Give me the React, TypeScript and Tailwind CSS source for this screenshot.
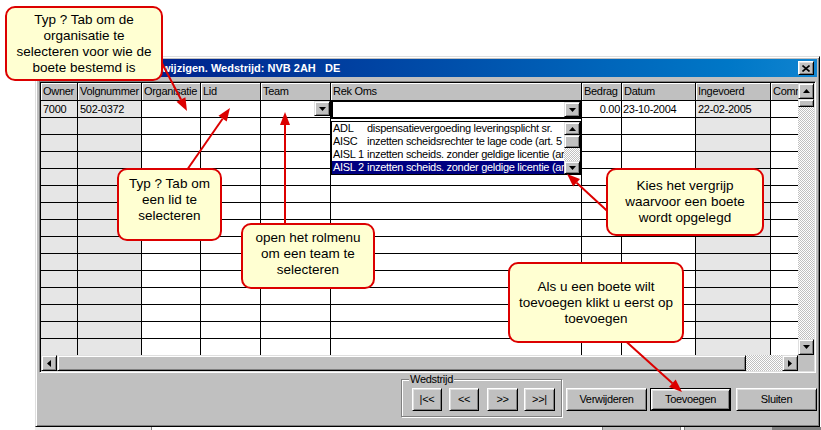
import React from "react"

// win98 bevels
const raised =
  "border border-t-white border-l-white border-r-black border-b-black shadow-[inset_1px_1px_#dfdfdf,inset_-1px_-1px_#808080] bg-[#c0c0c0]"
const sbtn =
  "border border-t-[#dfdfdf] border-l-[#dfdfdf] border-r-black border-b-black shadow-[inset_1px_1px_#ffffff,inset_-1px_-1px_#808080] bg-[#c0c0c0] flex items-center justify-center shrink-0"
const checker =
  "bg-[repeating-conic-gradient(#c0c0c0_0%_25%,#ffffff_0%_50%)] bg-[length:2px_2px]"

type Dir = "up" | "down" | "left" | "right"

function Tri({ dir }: { dir: Dir }) {
  const vert = dir === "up" || dir === "down"
  const w = vert ? 7 : 4
  const h = vert ? 4 : 7
  const pts = {
    up: "0,4 7,4 3.5,0",
    down: "0,0 7,0 3.5,4",
    left: "4,0 4,7 0,3.5",
    right: "0,0 0,7 4,3.5",
  }[dir]
  return (
    <svg width={w} height={h} viewBox={`0 0 ${w} ${h}`}>
      <polygon points={pts} fill="#000" />
    </svg>
  )
}

const cols = [
  { key: "owner", label: "Owner", w: "w-[37px]", body: "bg-[#e6e6e6]" },
  { key: "vol", label: "Volgnummer", w: "w-[64px]", body: "bg-[#e6e6e6]" },
  { key: "org", label: "Organisatie", w: "w-[59px]", body: "bg-white" },
  { key: "lid", label: "Lid", w: "w-[60px]", body: "bg-white" },
  { key: "team", label: "Team", w: "w-[70px]", body: "bg-white" },
  { key: "rek", label: "Rek Oms", w: "w-[251px]", body: "bg-white" },
  { key: "bedrag", label: "Bedrag", w: "w-[40px]", body: "bg-white" },
  { key: "datum", label: "Datum", w: "w-[74px]", body: "bg-white" },
  { key: "ingev", label: "Ingevoerd", w: "w-[75px]", body: "bg-[#e6e6e6]" },
  { key: "comm", label: "Commentaar", w: "w-[60px]", body: "bg-white" },
]

const first: Record<string, string> = {
  owner: "7000",
  vol: "502-0372",
  bedrag: "0.00",
  datum: "23-10-2004",
  ingev: "22-02-2005",
}

const rekItems = [
  { code: "ADL", desc: "dispensatievergoeding leveringsplicht sr." },
  { code: "AISC", desc: "inzetten scheidsrechter te lage code (art. 5" },
  { code: "AISL 1", desc: "inzetten scheids. zonder geldige licentie (art." },
  { code: "AISL 2", desc: "inzetten scheids. zonder geldige licentie (art." },
]

function Callout({ className, children }: { className: string; children: React.ReactNode }) {
  return (
    <div
      className={`absolute flex items-center justify-center text-center rounded-[10px] border-2 border-[#dc0000] bg-[#ffffd2] text-[13.5px] leading-[16px] text-black ${className}`}
    >
      <div>{children}</div>
    </div>
  )
}

function Grid() {
  return (
    <div className="mx-[1px] mt-[4px] h-[292px] border border-t-[#808080] border-l-[#808080] border-r-white border-b-white p-[1px] shadow-[inset_1px_1px_#000000,inset_-1px_-1px_#dfdfdf]">
      <div className="flex">
        <div className="relative w-[757px] h-[272px] overflow-hidden">
          {/* header */}
          <div className="flex h-[18px] border-b border-black">
            {cols.map((c) => (
              <div
                key={c.key}
                className={`${c.w} shrink-0 h-full bg-[#c0c0c0] border-r border-black shadow-[inset_1px_1px_#ffffff] px-[2px] leading-[17px] whitespace-nowrap overflow-hidden`}
              >
                {c.label}
              </div>
            ))}
          </div>
          {/* rows */}
          {Array.from({ length: 15 }).map((_, r) => (
            <div key={r} className="flex h-[17px] border-b border-black">
              {cols.map((c) => (
                <div
                  key={c.key}
                  className={`${c.w} ${c.body} shrink-0 h-full border-r border-black whitespace-nowrap overflow-hidden leading-[16px] ${
                    c.key === "bedrag" ? "text-right pr-[1px]" : c.key === "datum" ? "pl-[1px]" : "pl-[2px]"
                  } ${c.key === "team" && r === 0 ? "flex justify-end pr-0" : ""}`}
                >
                  {r === 0 && c.key === "team" ? (
                    <div className={`${sbtn} w-[16px] h-[15px]`}>
                      <Tri dir="down" />
                    </div>
                  ) : r === 0 ? (
                    first[c.key] ?? ""
                  ) : (
                    ""
                  )}
                </div>
              ))}
            </div>
          ))}

          {/* focused combo editor */}
          <div className="absolute left-[290px] top-[17px] w-[251px] h-[19px] border-2 border-black bg-white flex justify-end">
            <div className={`${sbtn} w-[16px] h-[15px]`}>
              <Tri dir="down" />
            </div>
          </div>

          {/* open dropdown */}
          <div className="absolute left-[290px] top-[38px] w-[250px] h-[54px] border border-black bg-white flex">
            <div className="flex-1 overflow-hidden">
              {rekItems.map((it, i) => (
                <div
                  key={it.code}
                  className={`h-[13px] leading-[13px] pl-[1px] whitespace-nowrap ${
                    i === 3 ? "bg-[#000080] text-white" : ""
                  }`}
                >
                  <span className="inline-block min-w-[34px] whitespace-pre">{it.code} </span>
                  {it.desc}
                </div>
              ))}
            </div>
            <div className="w-[16px] flex flex-col">
              <div className={`${sbtn} h-[13px]`}>
                <Tri dir="up" />
              </div>
              <div className={`${sbtn} h-[13px]`} />
              <div className={`flex-1 ${checker}`} />
              <div className={`${sbtn} h-[13px]`}>
                <Tri dir="down" />
              </div>
            </div>
          </div>
        </div>

        {/* vertical scrollbar */}
        <div className="w-[16px] h-[272px] flex flex-col">
          <div className={`${sbtn} h-[16px]`}>
            <Tri dir="up" />
          </div>
          <div className={`${sbtn} h-[8px]`} />
          <div className={`flex-1 ${checker}`} />
          <div className={`${sbtn} h-[16px]`}>
            <Tri dir="down" />
          </div>
        </div>
      </div>

      {/* horizontal scrollbar */}
      <div className="flex h-[16px]">
        <div className="w-[757px] flex">
          <div className={`${sbtn} w-[16px]`}>
            <Tri dir="left" />
          </div>
          <div className={`${sbtn} w-[689px]`} />
          <div className={`flex-1 ${checker}`} />
          <div className={`${sbtn} w-[16px]`}>
            <Tri dir="right" />
          </div>
        </div>
        <div className="w-[16px] bg-[#c0c0c0]" />
      </div>
    </div>
  )
}

function Btn({ label, className = "" }: { label: string; className?: string }) {
  return (
    <div className={`${raised} h-[23px] flex items-center justify-center ${className}`}>{label}</div>
  )
}

export default function App() {
  return (
    <div className="relative w-[821px] h-[430px] overflow-hidden bg-white text-black text-[11px] tracking-[-0.3px] font-['Liberation_Sans',Arial,sans-serif]">
      <div className="pt-[56px] pl-[35px]">
        {/* dialog window */}
        <div className="w-[785px] h-[371px] bg-[#c0c0c0] border border-t-[#dfdfdf] border-l-[#dfdfdf] border-r-black border-b-black shadow-[inset_1px_1px_#ffffff,inset_-1px_-1px_#808080] p-[2px] flex flex-col">
          {/* title bar */}
          <div className="h-[18px] bg-linear-to-r from-[#000080] to-[#1084d0] flex items-center pl-[124px] pr-[3px]">
            <span className="flex-1 text-white font-bold text-[11px] tracking-normal whitespace-pre">
              wijzigen. Wedstrijd: NVB 2AH   DE
            </span>
            <div className={`${raised} w-[16px] h-[14px] flex items-center justify-center`}>
              <svg width="8" height="7" viewBox="0 0 8 7">
                <path d="M0.5 0.5 L7.5 6.5 M7.5 0.5 L0.5 6.5" stroke="#000" strokeWidth="1.6" />
              </svg>
            </div>
          </div>

          <Grid />

          {/* bottom buttons */}
          <div className="flex justify-end items-start mt-[6px]">
            <div className="relative w-[161px] h-[38px] border border-[#808080] shadow-[inset_1px_1px_#ffffff,1px_1px_#ffffff] flex items-start pt-[8px] pl-[10px]">
              <span className="absolute -top-[7px] left-[7px] px-[1px] bg-[#c0c0c0] leading-[12px]">Wedstrijd</span>
              <Btn label="|<<" className="w-[30px]" />
              <Btn label="<<" className="w-[30px] ml-[7px]" />
              <Btn label=">>" className="w-[31px] ml-[8px]" />
              <Btn label=">>|" className="w-[31px] ml-[6px]" />
            </div>
            <Btn label="Verwijderen" className="w-[81px] ml-[4px] mt-[9px]" />
            <div className="w-[81px] h-[23px] ml-[3px] mt-[9px] border border-black">
              <Btn label="Toevoegen" className="w-full h-full" />
            </div>
            <Btn label="Sluiten" className="w-[81px] ml-[5px] mt-[9px]" />
          </div>
        </div>
        {/* bits of the app behind the dialog */}
        <div className="flex h-[4px] -ml-[35px]">
          <div className="w-[35px]" />
          <div className="w-[117px] bg-[#ececec] border-r border-[#808080]" />
          <div className="w-[450px]" />
          <div className="w-[79px] bg-[#c0c0c0] border-l border-r border-[#808080]" />
          <div className="w-[3px]" />
          <div className="w-[89px] bg-[#c0c0c0] border-l border-r border-[#808080]" />
          <div className="flex-1 bg-[#808080]" />
        </div>
      </div>

      {/* arrows */}
      <svg className="absolute left-0 top-0 pointer-events-none" width="821" height="430">
        <g stroke="#dc0000" strokeWidth="2" fill="none">
          <line x1="155" y1="50" x2="181" y2="99.5" />
          <line x1="180" y1="180" x2="222.6" y2="118.7" />
          <line x1="285" y1="240" x2="285" y2="125" />
          <line x1="616" y1="219" x2="576.6" y2="182.8" />
          <line x1="620" y1="336" x2="672.4" y2="383.3" />
        </g>
        <g fill="#dc0000">
          <polygon points="187,111 176.5,101.8 185.4,97.2" />
          <polygon points="230,108 226.7,121.5 218.5,115.8" />
          <polygon points="285,112 280,125 290,125" />
          <polygon points="567,174 580,179.1 573.2,186.5" />
          <polygon points="682,392 669,387 675.7,379.6" />
        </g>
      </svg>

      {/* callouts */}
      <Callout className="left-[5px] top-[6px] w-[158px] h-[75px] tracking-normal">
        Typ ? Tab om de
        <br />
        organisatie te
        <br />
        selecteren voor wie de
        <br />
        boete bestemd is
      </Callout>
      <Callout className="left-[117px] top-[168px] w-[105px] h-[73px] pb-[10px] tracking-normal">
        Typ ? Tab om
        <br />
        een lid te
        <br />
        selecteren
      </Callout>
      <Callout className="left-[241px] top-[223px] w-[134px] h-[66px] pb-[4px] tracking-normal">
        open het rolmenu
        <br />
        om een team te
        <br />
        selecteren
      </Callout>
      <Callout className="left-[606px] top-[168px] w-[158px] h-[68px] tracking-normal">
        Kies het vergrijp
        <br />
        waarvoor een boete
        <br />
        wordt opgelegd
      </Callout>
      <Callout className="left-[508px] top-[262px] w-[176px] h-[81px] tracking-normal">
        Als u een boete wilt
        <br />
        toevoegen klikt u eerst op
        <br />
        toevoegen
      </Callout>
    </div>
  )
}
